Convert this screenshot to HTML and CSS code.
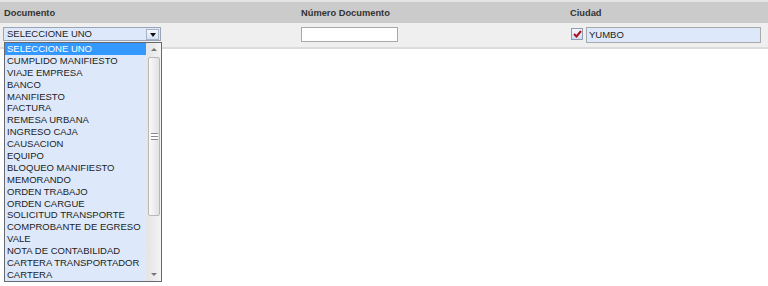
FILE: index.html
```html
<!DOCTYPE html>
<html lang="es">

<head>
    <meta charset="UTF-8">
    <meta name="viewport" content="width=device-width, initial-scale=1.0">
    <title>Documentos</title>
    <link rel="stylesheet" href="styles.css">
</head>

<body>
    <div class="top-strip"></div>

    <div class="grid-row header-row">
        <div class="cell">Documento</div>
        <div class="cell">Número Documento</div>
        <div class="cell">Ciudad</div>
    </div>

    <div class="grid-row data-row">
        <div class="cell cell-doc">
            <div class="combo">
                <span class="combo-text">SELECCIONE UNO</span>
                <span class="combo-btn"><span class="tri-down"></span></span>
            </div>
        </div>
        <div class="cell cell-num">
            <div class="text-input"></div>
        </div>
        <div class="cell cell-city">
            <span class="check">
                <svg width="9" height="8" viewBox="0 0 9 8">
                    <path d="M1 4 L3.5 6.5 L8 1" fill="none" stroke="#b0101a" stroke-width="2"/>
                </svg>
            </span>
            <div class="text-input city-input">YUMBO</div>
        </div>
    </div>

    <!-- open dropdown of the Documento combo -->
    <div class="combo-list">
        <ul class="options">
            <li class="selected">SELECCIONE UNO</li>
            <li>CUMPLIDO MANIFIESTO</li>
            <li>VIAJE EMPRESA</li>
            <li>BANCO</li>
            <li>MANIFIESTO</li>
            <li>FACTURA</li>
            <li>REMESA URBANA</li>
            <li>INGRESO CAJA</li>
            <li>CAUSACION</li>
            <li>EQUIPO</li>
            <li>BLOQUEO MANIFIESTO</li>
            <li>MEMORANDO</li>
            <li>ORDEN TRABAJO</li>
            <li>ORDEN CARGUE</li>
            <li>SOLICITUD TRANSPORTE</li>
            <li>COMPROBANTE DE EGRESO</li>
            <li>VALE</li>
            <li>NOTA DE CONTABILIDAD</li>
            <li>CARTERA TRANSPORTADOR</li>
            <li>CARTERA</li>
        </ul>
        <div class="scrollbar">
            <div class="sb-arrow"><span class="sb-up"></span></div>
            <div class="sb-track">
                <div class="sb-thumb"><span class="grip"></span></div>
            </div>
            <div class="sb-arrow"><span class="sb-down"></span></div>
        </div>
    </div>
</body>

</html>
```

FILE: styles.css
```css
html,
body {
    height: 100%;
}

body {
    margin: 0;
    position: relative;
    background-color: #ffffff;
    font-family: "Liberation Sans", Arial, sans-serif;
    color: #1c1c1c;
}

.top-strip {
    height: 2px;
    background-color: #e4e4e4;
}

.grid-row {
    display: grid;
    grid-template-columns: 297px 269px 1fr;
}

/* Header */
.header-row {
    height: 21px;
    background-color: #cbcbcb;
    align-items: center;
    font-size: 9.3px;
    font-weight: bold;
    color: #333333;
}

.header-row .cell {
    padding-left: 4px;
    padding-top: 1px;
}

/* Data row */
.data-row {
    height: 24px;
    background-color: #efefef;
    border-bottom: 2px solid #dcdcdc;
    font-size: 9.5px;
}

.cell {
    display: flex;
    align-items: flex-start;
}

.cell-doc {
    padding: 4px 0 0 3px;
}

.cell-num {
    padding: 4px 0 0 4px;
}

.cell-city {
    padding: 4px 0 0 5px;
    gap: 3px;
}

/* Fake select */
.combo {
    width: 156px;
    height: 12px;
    border: 1px solid #9aa6b8;
    background-color: #dde9fb;
    display: flex;
    align-items: center;
}

.combo-text {
    padding-left: 3px;
    flex: 1;
    line-height: 12px;
}

.combo-btn {
    width: 13px;
    height: 11px;
    margin-right: 1px;
    border: 1px solid #a8b4c6;
    background: linear-gradient(#f4f8fe, #d6e2f4);
    display: flex;
    align-items: center;
    justify-content: center;
    box-sizing: border-box;
}

.tri-down {
    width: 0;
    height: 0;
    border-left: 3.5px solid transparent;
    border-right: 3.5px solid transparent;
    border-top: 4px solid #111111;
    margin-top: 1px;
}

/* Dropdown list overlay */
.combo-list {
    position: absolute;
    top: 42px;
    left: 4px;
    width: 156px;
    height: 238px;
    border: 1px solid #666a70;
    background-color: #dde9fb;
    display: flex;
    font-size: 9.5px;
    z-index: 2;
}

.options {
    list-style: none;
    margin: 0;
    padding: 0;
    flex: 1;
}

.options li {
    height: 11.9px;
    line-height: 11.9px;
    padding-left: 2px;
    white-space: nowrap;
    overflow: hidden;
}

.options li.selected {
    background-color: #3399ff;
    color: #ffffff;
}

.scrollbar {
    width: 14px;
    display: flex;
    flex-direction: column;
    background: linear-gradient(to right, #e4e4e4, #f4f4f4);
    border-left: 1px solid #e8e8e8;
}

.sb-arrow {
    height: 13px;
    display: flex;
    align-items: center;
    justify-content: center;
}

.sb-up,
.sb-down {
    width: 0;
    height: 0;
    border-left: 3px solid transparent;
    border-right: 3px solid transparent;
}

.sb-up {
    border-bottom: 3px solid #777777;
}

.sb-down {
    border-top: 3px solid #777777;
}

.sb-track {
    flex: 1;
    padding-top: 1px;
}

.sb-thumb {
    height: 157px;
    margin: 0 1px;
    border: 1px solid #b8b8b8;
    border-radius: 2px;
    background: linear-gradient(to right, #fafafa, #e2e2e2);
    display: flex;
    align-items: center;
    justify-content: center;
}

.grip {
    width: 7px;
    height: 5px;
    border-top: 1px solid #8a8a8a;
    border-bottom: 1px solid #8a8a8a;
    background: linear-gradient(#ffffff 0 2px, #8a8a8a 2px 3px, #ffffff 3px);
}

/* Inputs */
.text-input {
    width: 95px;
    height: 13px;
    border: 1px solid #a9a9a9;
    background-color: #ffffff;
}

.city-input {
    width: 171px;
    height: 14px;
    background-color: #dde9fb;
    line-height: 14px;
    padding-left: 2px;
    color: #1c1c1c;
}

.check {
    width: 10px;
    height: 10px;
    margin-top: 1px;
    border: 1px solid #8f9bb0;
    background: linear-gradient(#f6f9fe, #cfdcf2);
    display: flex;
    align-items: center;
    justify-content: center;
}
```
